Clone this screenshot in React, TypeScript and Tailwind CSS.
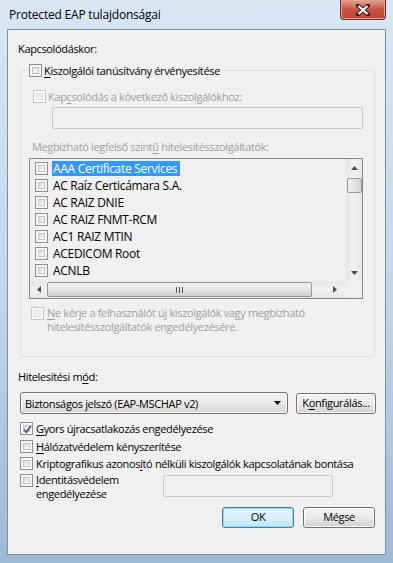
import React from 'react';

const font = "font-['Segoe_UI','Open_Sans',sans-serif] text-[11px] tracking-[-0.35px]";

// win7 style checkbox
const Box = ({ checked = false, disabled = false }: { checked?: boolean; disabled?: boolean }) => (
  <span
    className={
      disabled
        ? 'relative flex h-[13px] w-[13px] shrink-0 border border-[#c8c8c8] bg-[#f9f9f9] p-[2px]'
        : 'relative flex h-[13px] w-[13px] shrink-0 border border-[#8e8f8f] bg-[#f7f7f7] p-[2px]'
    }
  >
    <span
      className={
        disabled
          ? 'flex-1 border border-[#e4e4e4] bg-[#efefef]'
          : 'flex-1 border border-[#c2c4c8] bg-gradient-to-br from-[#d9dbde] to-[#fafafa]'
      }
    />
    {checked && (
      <svg className="absolute left-[1px] top-[1px]" width="11" height="11" viewBox="0 0 11 11">
        <path d="M2 5.5 L4.3 8.2 L9 1.8" fill="none" stroke="#4a5c98" strokeWidth="1.8" />
      </svg>
    )}
  </span>
);

const U = ({ children }: { children: React.ReactNode }) => <span className="underline underline-offset-2">{children}</span>;

const Button = ({ children, focused = false }: { children: React.ReactNode; focused?: boolean }) => (
  <div
    className={
      focused
        ? 'flex h-[21px] w-[72px] items-center justify-center rounded-[3px] border border-[#3c7fb1] bg-gradient-to-b from-[#eaf6fd] via-[#d9f0fc] to-[#bee6fd] shadow-[inset_0_0_0_1px_#9ad5f6]'
        : 'flex h-[21px] w-[72px] items-center justify-center rounded-[3px] border border-[#707070] bg-gradient-to-b from-[#f2f2f2] via-[#ebebeb] to-[#d0d0d0] shadow-[inset_0_0_0_1px_#fcfcfc]'
    }
  >
    {children}
  </div>
);

const UpArrow = () => (
  <svg width="7" height="4" viewBox="0 0 7 4"><path d="M0 4 L3.5 0 L7 4 Z" fill="#4d4d4d" /></svg>
);
const DownArrow = () => (
  <svg width="7" height="4" viewBox="0 0 7 4"><path d="M0 0 L3.5 4 L7 0 Z" fill="#4d4d4d" /></svg>
);
const LeftArrow = () => (
  <svg width="4" height="7" viewBox="0 0 4 7"><path d="M4 0 L0 3.5 L4 7 Z" fill="#4d4d4d" /></svg>
);
const RightArrow = () => (
  <svg width="4" height="7" viewBox="0 0 4 7"><path d="M0 0 L4 3.5 L0 7 Z" fill="#4d4d4d" /></svg>
);

export default function App() {
  const cas = [
    'AAA Certificate Services',
    'AC Raíz Certicámara S.A.',
    'AC RAIZ DNIE',
    'AC RAIZ FNMT-RCM',
    'AC1 RAIZ MTIN',
    'ACEDICOM Root',
    'ACNLB',
  ];

  return (
    <div className={`${font} h-[563px] w-[393px] overflow-hidden bg-gradient-to-b from-[#d9e7f5] via-[#c3d7ec] to-[#9fb9d4] text-black`}>
      {/* title bar */}
      <div className="flex h-[29px] justify-between pl-[9px] pr-[7px]">
        <span className="self-center text-[12px] leading-[15px] tracking-[-0.2px]">Protected EAP tulajdonságai</span>
        <div className="flex h-[20px] w-[46px] items-center justify-center rounded-b-[4px] border border-t-0 border-[#6a2a22] bg-gradient-to-b from-[#e0a394] via-[#c75343] to-[#c9402b] shadow-[inset_0_0_0_1px_#e8a08f]">
          <svg width="14" height="12" viewBox="0 0 14 12">
            <path d="M2 1.5 L12 10.5 M12 1.5 L2 10.5" stroke="#4a1a14" strokeWidth="4" strokeLinecap="square" />
            <path d="M2.5 2 L11.5 10 M11.5 2 L2.5 10" stroke="#ffffff" strokeWidth="2.2" />
          </svg>
        </div>
      </div>

      {/* client area */}
      <div className="ml-[7px] h-[526px] w-[379px] border border-[#7f8fa3] bg-[#f0f0f0]">
        <div className="ml-[10px] mt-[11px] leading-[15px]">Kapcsolódáskor:</div>

        <fieldset className="ml-[12px] mt-[7px] w-[355px] rounded-[3px] border border-[#d5dfe5] pb-[22px] pl-[8px]">
          <legend className="-ml-[3px] px-[3px]">
            <div className="flex items-center gap-[2px] leading-[15px]">
              <Box />
              <span>
                <U>K</U>iszolgálói tanúsítvány érvényesítése
              </span>
            </div>
          </legend>

          <div className="ml-[4px] mt-[11px] flex items-center gap-[2px] leading-[15px] text-[#a0a0a0]">
            <Box disabled />
            <span>
              Kap<U>c</U>solódás a következő kiszolgálókhoz:
            </span>
          </div>

          <div className="ml-[23px] mt-[3px] h-[22px] w-[311px] rounded-[2px] border border-[#c9c9c9] bg-[#f0f0f0]" />

          <div className="ml-[3px] mt-[10px] leading-[15px] text-[#a0a0a0]">
            Megbízható legfelső szint<U>ű</U> hitelesítésszolgáltatók:
          </div>

          {/* certificate list */}
          <div className="mt-[4px] grid h-[141px] w-[334px] grid-cols-[1fr_16px] grid-rows-[1fr_17px] border border-[#828790] bg-[#f0f0f0]">
            <div className="overflow-hidden pt-[1px] text-[12px] tracking-[-0.3px]">
              {cas.map((ca, i) => (
                <div key={ca} className="flex h-[17px] items-center whitespace-nowrap pl-[5px]">
                  <Box />
                  <span
                    className={
                      i === 0
                        ? 'ml-[4px] bg-[#3399ff] pl-[1px] pr-[3px] leading-[15px] text-white'
                        : 'ml-[4px] pl-[1px] leading-[15px]'
                    }
                  >
                    {ca}
                  </span>
                </div>
              ))}
            </div>

            {/* vertical scrollbar */}
            <div className="flex flex-col items-center bg-gradient-to-r from-[#e6e6e6] via-[#f2f2f2] to-[#e6e6e6]">
              <div className="flex h-[17px] items-center">
                <UpArrow />
              </div>
              <div className="mt-[2px] h-[15px] w-[15px] rounded-[2px] border border-[#979797] bg-gradient-to-r from-[#f2f2f2] to-[#d3d3d3]" />
              <div className="flex-1" />
              <div className="flex h-[17px] items-center">
                <DownArrow />
              </div>
            </div>

            {/* horizontal scrollbar */}
            <div className="flex items-center bg-gradient-to-b from-[#e6e6e6] via-[#f2f2f2] to-[#e6e6e6]">
              <div className="flex w-[17px] justify-center">
                <LeftArrow />
              </div>
              <div className="flex h-[15px] w-[265px] items-center justify-center rounded-[2px] border border-[#979797] bg-gradient-to-b from-[#f2f2f2] via-[#e6e6e6] to-[#cfcfcf]">
                <svg width="7" height="6" viewBox="0 0 7 6">
                  <path d="M0.5 0 V6 M3.5 0 V6 M6.5 0 V6" stroke="#5a5a5a" strokeWidth="1" />
                </svg>
              </div>
              <div className="flex flex-1 justify-end pr-[9px]">
                <RightArrow />
              </div>
            </div>
            <div className="bg-[#f0f0f0]" />
          </div>

          <div className="ml-[2px] mt-[7px] flex items-start gap-[3px] leading-[14px] text-[#a0a0a0]">
            <span className="mt-[1px]">
              <Box disabled />
            </span>
            <span>
              <U>N</U>e kérje a felhasználót új kiszolgálók vagy megbízható
              <br />
              hitelesítésszolgáltatók engedélyezésére.
            </span>
          </div>
        </fieldset>

        <div className="ml-[10px] mt-[12px] leading-[15px]">
          Hitelesítési m<U>ó</U>d:
        </div>

        <div className="ml-[12px] mt-[8px] flex gap-[8px]">
          <div className="flex h-[22px] w-[268px] items-center justify-between rounded-[3px] border border-[#707070] bg-gradient-to-b from-[#f2f2f2] via-[#ebebeb] to-[#d6d6d6] pl-[4px] pr-[6px] shadow-[inset_0_0_0_1px_#fbfbfb]">
            <span className="leading-[15px]">Biztonságos jelszó (EAP-MSCHAP v2)</span>
            <svg width="7" height="4" viewBox="0 0 7 4"><path d="M0 0 L3.5 4 L7 0 Z" fill="#000" /></svg>
          </div>
          <div className="mt-[1px] flex h-[21px] w-[80px] items-center justify-center rounded-[3px] border border-[#707070] bg-gradient-to-b from-[#f2f2f2] via-[#ebebeb] to-[#d0d0d0] shadow-[inset_0_0_0_1px_#fcfcfc]">
            <span>
              K<U>o</U>nfigurálás...
            </span>
          </div>
        </div>

        <div className="ml-[12px] mt-[7px] flex items-center gap-[3px] leading-[15px]">
          <Box checked />
          <span>
            <U>G</U>yors újracsatlakozás engedélyezése
          </span>
        </div>
        <div className="ml-[12px] mt-[3px] flex items-center gap-[3px] leading-[15px]">
          <Box />
          <span>
            <U>H</U>álózatvédelem kényszerítése
          </span>
        </div>
        <div className="ml-[12px] mt-[2px] flex items-center gap-[3px] leading-[15px]">
          <Box />
          <span>
            Kriptografikus azonos<U>í</U>tó nélküli kiszolgálók kapcsolatának bontása
          </span>
        </div>
        <div className="ml-[12px] mt-[2px] flex items-start">
          <span className="mt-[1px]">
            <Box />
          </span>
          <span className="ml-[3px] w-[127px] leading-[14px]">
            <U>I</U>dentitásvédelem
            <br />
            engedélyezése
          </span>
          <div className="mt-[2px] h-[22px] w-[170px] rounded-[2px] border border-[#c9c9c9] bg-[#f0f0f0]" />
        </div>

        <div className="mr-[10px] mt-[6px] flex justify-end gap-[9px]">
          <Button focused>OK</Button>
          <Button>Mégse</Button>
        </div>
      </div>
    </div>
  );
}
